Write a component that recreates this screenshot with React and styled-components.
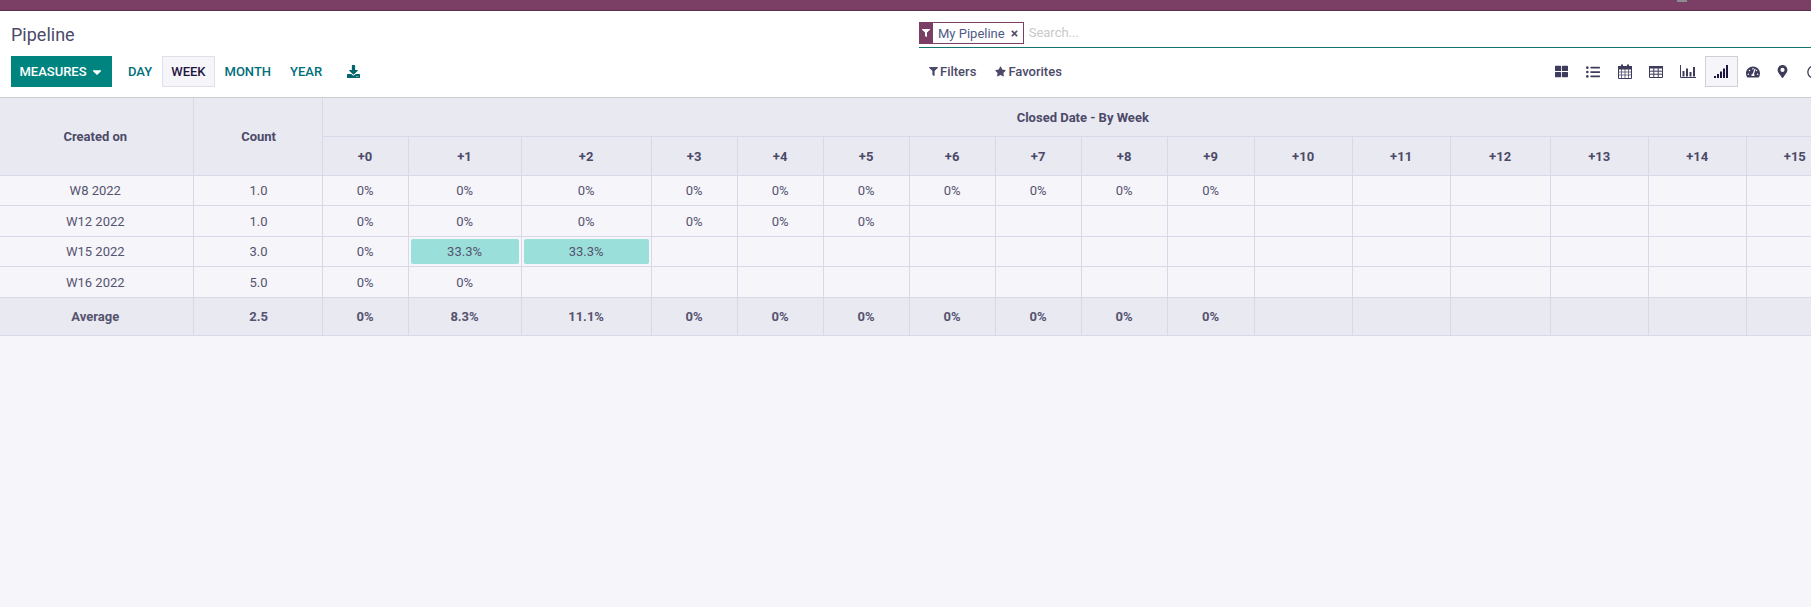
import React from 'react'
import styled, { createGlobalStyle } from 'styled-components'
import {
  FaThLarge, FaListUl, FaTachometerAlt, FaMapMarkerAlt, FaRegClock, FaDownload, FaFilter, FaStar, FaTimes, FaCaretDown,
} from 'react-icons/fa'

const GlobalStyle = createGlobalStyle`
  html, body { margin: 0; padding: 0; height: 100%; overflow: hidden; }
  body { background: #f5f5fa; font-family: Roboto, "Noto Sans", sans-serif; font-size: 13px; color: #4c4a68; }
  #root { height: 100%; }
`

const teal = '#016f7a'
const purple = '#7b3f66'
const line = '#d9d8e8'

const Page = styled.div`
  width: 1811px;
  height: 607px;
  overflow: hidden;
  display: flex;
  flex-direction: column;
  background: #f5f5fa;
`
const TopBar = styled.div`
  height: 10px;
  flex: none;
  background: ${purple};
  border-bottom: 1px solid #5c2f4c;
  display: flex;
  justify-content: flex-end;
`
const AvatarEdge = styled.div`
  width: 10px;
  height: 2px;
  margin-right: 124px;
  background: #8d8a90;
`
const ControlPanel = styled.div`
  height: 87px;
  flex: none;
  box-sizing: border-box;
  background: #fff;
  border-bottom: 1px solid #ccc;
  display: grid;
  grid-template-columns: 919px 1fr;
`
const Left = styled.div`
  padding: 13px 0 0 11px;
`
const Title = styled.div`
  font-size: 18px;
  line-height: 22px;
  color: #4c4a68;
  margin-bottom: 10px;
`
const Buttons = styled.div`
  display: flex;
  align-items: center;
  height: 31px;
`
const MeasuresButton = styled.button`
  height: 31px;
  width: 101px;
  border: 0;
  padding: 0;
  background: #00847f;
  color: #fff;
  font: 500 13px Roboto, sans-serif;
  display: flex;
  align-items: center;
  justify-content: center;
  gap: 3px;
  margin-right: 6.5px;
`
const Interval = styled.button`
  height: 31px;
  box-sizing: border-box;
  padding: 0 8.5px;
  background: ${p => (p.$active ? '#f5f5fa' : 'transparent')};
  border: 1px solid ${p => (p.$active ? '#dee0ea' : 'transparent')};
  color: ${p => (p.$active ? '#1f1640' : teal)};
  font: 500 13px Roboto, sans-serif;
`
const DownloadIcon = styled.span`
  color: #05656f;
  margin-left: 15px;
  display: flex;
`
const Right = styled.div`
  display: flex;
  flex-direction: column;
`
const SearchBox = styled.div`
  height: 26px;
  margin-top: 11px;
  box-sizing: border-box;
  border-bottom: 1px solid #14756f;
  display: flex;
  align-items: flex-start;
`
const Facet = styled.div`
  height: 22px;
  box-sizing: border-box;
  border: 1px solid ${purple};
  display: flex;
  align-items: center;
  background: #fff;
`
const FacetIcon = styled.span`
  width: 14px;
  height: 22px;
  margin-left: -1px;
  background: ${purple};
  color: #fff;
  display: flex;
  align-items: center;
  justify-content: center;
`
const FacetLabel = styled.span`
  margin-left: 5px;
  font-size: 13px;
  color: #4f5a86;
`
const FacetClose = styled.span`
  display: flex;
  margin: 1px 4px 0 5px;
  color: #55536f;
`
const Placeholder = styled.span`
  margin-left: 5px;
  line-height: 21px;
  color: #c9c9c9;
  font-size: 13px;
`
const ToolRow = styled.div`
  display: flex;
  align-items: center;
  justify-content: space-between;
  height: 31px;
  margin-top: 8px;
`
const FilterGroup = styled.div`
  display: flex;
  margin-left: 10px;
  gap: 19px;
`
const FilterItem = styled.span`
  display: flex;
  align-items: center;
  gap: 2px;
  font-weight: 500;
  font-size: 13px;
  color: #4c4a68;
`
const Views = styled.div`
  display: flex;
  align-items: center;
  width: 265px;
  overflow: hidden;
  flex: none;
`
const ViewButton = styled.span`
  flex: none;
  width: ${p => p.$w || 31.5}px;
  height: 31px;
  margin-left: ${p => (p.$active ? 1 : 0)}px;
  box-sizing: border-box;
  display: flex;
  align-items: center;
  justify-content: center;
  color: ${p => (p.$active ? '#1f1640' : '#3e3c5c')};
  background: ${p => (p.$active ? '#f5f5fa' : 'transparent')};
  border: 1px solid ${p => (p.$active ? '#cfcfd6' : 'transparent')};
`
const TableWrap = styled.div`
  flex: 1;
  overflow: hidden;
`
const Table = styled.table`
  table-layout: fixed;
  border-collapse: collapse;
  width: 1844px;
  font-size: 13px;
`
const Th = styled.th`
  background: #e9e9f2;
  border: 1px solid ${line};
  border-top: 0;
  border-left-width: ${p => (p.$edge ? 0 : 1)}px;
  height: ${p => p.$h || 38}px;
  padding: 0 ${p => p.$padR || 0}px 0 ${p => p.$padL || 0}px;
  font-weight: 700;
  text-align: center;
  vertical-align: middle;
  color: #4c4a68;
`
const Td = styled.td`
  border: 1px solid ${line};
  border-left-width: ${p => (p.$edge ? 0 : 1)}px;
  height: ${p => p.$h}px;
  padding: 0 ${p => p.$padR || 0}px 0 ${p => p.$padL || 0}px;
  text-align: center;
  vertical-align: middle;
  background: ${p => (p.$total ? '#e9e9f2' : '#f5f5fa')};
  font-weight: ${p => (p.$total ? 700 : 400)};
  color: #55536f;
`
const Filled = styled.div`
  margin: 2px;
  height: 25px;
  line-height: 25px;
  border-radius: 2px;
  background: #9bdfdb;
`

function CalendarIcon() {
  return (
    <svg width="14" height="15" viewBox="0 0 14 15" fill="none">
      <path d="M3 .5h2v3H3zM9 .5h2v3H9z" fill="currentColor" />
      <path d="M.5 2.500h13v12H.5z" stroke="currentColor" />
      <path d="M0 2h14v3.500H0z" fill="currentColor" />
      <path d="M3.500 5v9M7 5v9M10.500 5v9M1 8h12M1 11h12" stroke="currentColor" strokeWidth=".7" />
    </svg>
  )
}

function TableIcon() {
  return (
    <svg width="14" height="12" viewBox="0 0 14 12" fill="none">
      <path d="M.5.5h13v11H.5z" stroke="currentColor" />
      <path d="M0 0h14v2.500H0z" fill="currentColor" />
      <path d="M4.800 2v9M9.200 2v9M1 5.200h12M1 8.200h12" stroke="currentColor" />
    </svg>
  )
}

function BarsIcon() {
  return (
    <svg width="16" height="13" viewBox="0 0 16 13" fill="none">
      <path d="M.5 0v12.500H16" stroke="currentColor" />
      <path d="M2.500 6h2v5.500h-2zM6 3.500h2v8H6zM9.500 7h2v4.500h-2zM13 2h2v9.500h-2z" fill="currentColor" />
    </svg>
  )
}

function SignalIcon() {
  return (
    <svg width="14" height="13" viewBox="0 0 14 13">
      <path d="M0 11h2v2H0zM3 9h2v4H3zM6 6.500h2V13H6zM9 3.500h2V13H9zM12 0h2v13h-2z" fill="currentColor" />
    </svg>
  )
}

const widths = [193, 129, 86, 113, 130, 86, 86, 86, 86, 86, 86, 87, 98, 98, 100, 98, 98, 97]
const offsets = Array.from({ length: 16 }, (_, i) => i)

const rows = [
  ['W8 2022', '1.0', 29, ['0%', '0%', '0%', '0%', '0%', '0%', '0%', '0%', '0%', '0%']],
  ['W12 2022', '1.0', 30, ['0%', '0%', '0%', '0%', '0%', '0%']],
  ['W15 2022', '3.0', 29, ['0%', '33.3%', '33.3%']],
  ['W16 2022', '5.0', 30, ['0%', '0%']],
]
const average = ['0%', '8.3%', '11.1%', '0%', '0%', '0%', '0%', '0%', '0%', '0%']

export default function App() {
  return (
    <Page>
      <GlobalStyle />
      <TopBar><AvatarEdge /></TopBar>
      <ControlPanel>
        <Left>
          <Title>Pipeline</Title>
          <Buttons>
            <MeasuresButton>MEASURES <FaCaretDown size={14} /></MeasuresButton>
            <Interval>DAY</Interval>
            <Interval $active>WEEK</Interval>
            <Interval>MONTH</Interval>
            <Interval>YEAR</Interval>
            <DownloadIcon><FaDownload size={13} /></DownloadIcon>
          </Buttons>
        </Left>
        <Right>
          <SearchBox>
            <Facet>
              <FacetIcon><FaFilter size={8} /></FacetIcon>
              <FacetLabel>My Pipeline</FacetLabel>
              <FacetClose><FaTimes size={9} /></FacetClose>
            </Facet>
            <Placeholder>Search...</Placeholder>
          </SearchBox>
          <ToolRow>
            <FilterGroup>
              <FilterItem><FaFilter size={9} />Filters</FilterItem>
              <FilterItem><FaStar size={11} />Favorites</FilterItem>
            </FilterGroup>
            <Views>
              <ViewButton><FaThLarge size={13} /></ViewButton>
              <ViewButton><FaListUl size={14} /></ViewButton>
              <ViewButton><CalendarIcon /></ViewButton>
              <ViewButton><TableIcon /></ViewButton>
              <ViewButton><BarsIcon /></ViewButton>
              <ViewButton $active $w={33}><SignalIcon /></ViewButton>
              <ViewButton $w={31}><FaTachometerAlt size={14} /></ViewButton>
              <ViewButton $w={28}><FaMapMarkerAlt size={13} /></ViewButton>
              <ViewButton $w={34}><FaRegClock size={14} /></ViewButton>
            </Views>
          </ToolRow>
        </Right>
      </ControlPanel>
      <TableWrap>
        <Table>
          <colgroup>
            {widths.map((w, i) => <col key={i} style={{ width: w }} />)}
          </colgroup>
          <thead>
            <tr>
              <Th rowSpan={2} $edge $padR={2}>Created on</Th>
              <Th rowSpan={2} $padL={2}>Count</Th>
              <Th colSpan={16}>Closed Date - By Week</Th>
            </tr>
            <tr>
              {offsets.map(i => <Th key={i}>+{i}</Th>)}
            </tr>
          </thead>
          <tbody>
            {rows.map(([label, count, h, values]) => (
              <tr key={label}>
                <Td $edge $padR={2} $h={h}>{label}</Td>
                <Td $padL={2} $h={h}>{count}</Td>
                {offsets.map(i => (
                  <Td key={i} $h={h}>
                    {values[i] === '33.3%' ? <Filled>{values[i]}</Filled> : values[i]}
                  </Td>
                ))}
              </tr>
            ))}
            <tr>
              <Td $total $edge $padR={2} $h={37}>Average</Td>
              <Td $total $padL={2} $h={37}>2.5</Td>
              {offsets.map(i => <Td key={i} $total $h={37}>{average[i]}</Td>)}
            </tr>
          </tbody>
        </Table>
      </TableWrap>
    </Page>
  )
}
